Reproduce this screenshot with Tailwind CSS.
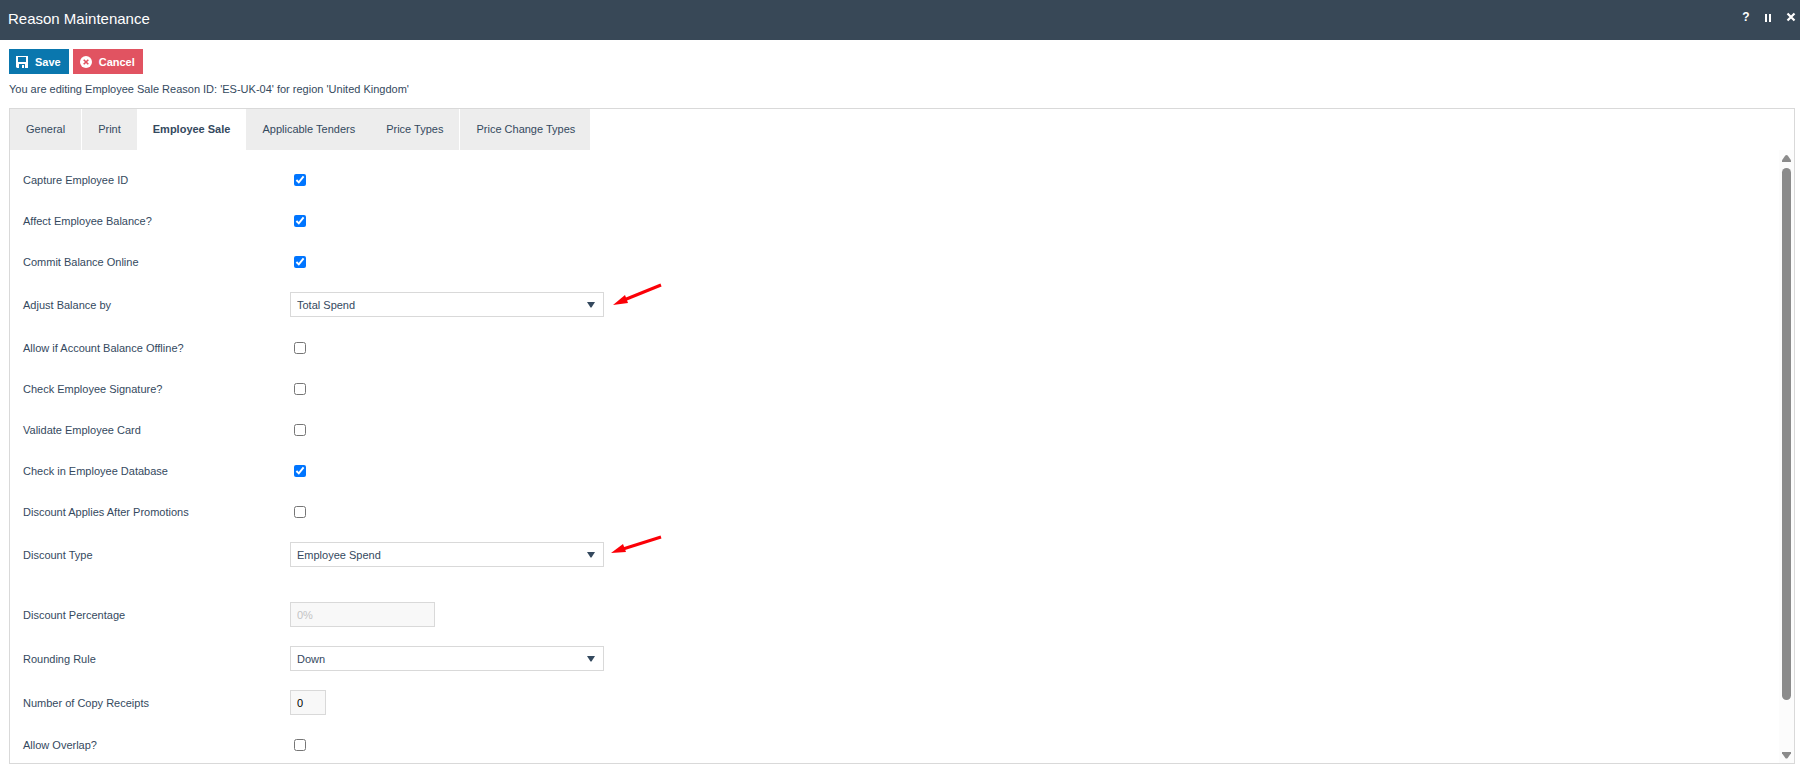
<!DOCTYPE html>
<html lang="en">
<head>
    <meta charset="UTF-8">
    <meta name="viewport" content="width=device-width, initial-scale=1.0">
    <title>Reason Maintenance</title>
    <script src="https://cdn.jsdelivr.net/npm/@tailwindcss/browser@4"></script>
    <style>
        body {
            font-family: 'Liberation Sans', Arial, sans-serif;
        }
    </style>
</head>
<body class="h-screen flex flex-col overflow-hidden bg-white text-[11px] leading-4 text-[#34495e]">
    <!-- Header -->
    <header class="h-10 shrink-0 flex items-center justify-between bg-[#384857] text-white pl-2 pr-[3px] pb-[2px]">
        <h1 class="text-[15px] leading-5">Reason Maintenance</h1>
        <div class="flex items-center gap-3 pb-1">
            <button type="button" aria-label="Help" class="w-[10px] h-4 font-bold text-[12px] leading-4 text-center">?</button>
            <button type="button" aria-label="Pause" class="w-[10px] h-4 flex items-center justify-center pt-[2px]">
                <svg class="w-[10px] h-[10px]" viewBox="0 0 10 10" fill="currentColor"><path d="M2 1h2v8H2zM6 1h2v8H6z" /></svg>
            </button>
            <button type="button" aria-label="Close" class="w-3 h-4 flex items-center justify-center">
                <svg class="w-[10px] h-[10px]" viewBox="0 0 10 10" fill="none" stroke="currentColor" stroke-width="2.2"><path d="M1.5 1.5l7 7M8.5 1.5l-7 7" /></svg>
            </button>
        </div>
    </header>

    <main class="flex-1 min-h-0 flex flex-col pt-[9px] pl-[9px] pr-[5px] pb-px">
        <!-- Toolbar -->
        <div class="flex gap-1">
            <button type="button" class="h-[25px] flex items-center gap-[7px] pl-[7px] pr-2 bg-[#0a77ae] text-white font-bold">
                <svg class="w-3 h-3" viewBox="0 0 12 12"><path fill="#fff" fill-rule="evenodd" d="M0 0h12v12H1L0 11zM2 1v5h8V1zM3 8v4h6V8z" /><path fill="#fff" d="M6 9h2v3H6z" /></svg>
                Save
            </button>
            <button type="button" class="h-[25px] flex items-center gap-[7px] pl-[7px] pr-2 bg-[#e15361] text-white font-bold">
                <svg class="w-3 h-3" viewBox="0 0 12 12"><circle cx="6" cy="6" r="6" fill="#fff" /><path d="M3.7 3.7l4.6 4.6M8.3 3.7L3.7 8.3" stroke="#e15361" stroke-width="1.6" /></svg>
                Cancel
            </button>
        </div>
        <p class="mt-[7px] mb-[11px]">You are editing Employee Sale Reason ID: 'ES-UK-04' for region 'United Kingdom'</p>

        <section class="flex-1 min-h-0 flex flex-col border border-[#d9d9d9]">
            <!-- Tabs -->
            <nav class="h-[41px] shrink-0 flex">
                <a href="#general" class="flex items-center px-4 pb-[2px] mr-px bg-[#ededed]">General</a>
                <a href="#print" class="flex items-center px-4 pb-[2px] bg-[#ededed]">Print</a>
                <a href="#employee-sale" class="flex items-center px-4 pb-[2px] font-bold">Employee Sale</a>
                <a href="#tenders" class="flex items-center px-4 pb-[2px] bg-[#ededed]">Applicable Tenders</a>
                <a href="#price-types" class="flex items-center pl-[15px] pr-4 pb-[2px] mr-px bg-[#ededed]">Price Types</a>
                <a href="#price-change" class="flex items-center pl-4 pr-[15px] pb-[2px] bg-[#ededed]">Price Change Types</a>
            </nav>

            <div class="flex-1 min-h-0 flex">
                <!-- Employee Sale settings -->
                <form class="flex-1 overflow-y-auto [scrollbar-width:none] pt-[9px] pl-[13px]">
                    <div class="h-[41px] flex items-center">
                        <label for="capture-id" class="w-[267px]">Capture Employee ID</label>
                        <input id="capture-id" type="checkbox" checked class="w-3 h-3 ml-1">
                    </div>
                    <div class="h-[41px] flex items-center">
                        <label for="affect-balance" class="w-[267px]">Affect Employee Balance?</label>
                        <input id="affect-balance" type="checkbox" checked class="w-3 h-3 ml-1">
                    </div>
                    <div class="h-[41px] flex items-center">
                        <label for="commit-balance" class="w-[267px]">Commit Balance Online</label>
                        <input id="commit-balance" type="checkbox" checked class="w-3 h-3 ml-1">
                    </div>
                    <div class="h-[45px] flex items-center">
                        <label for="adjust-by" class="w-[267px]">Adjust Balance by</label>
                        <div class="relative w-[314px]">
                            <select id="adjust-by" class="block w-full h-[25px] pl-[6px] appearance-none bg-white border border-[#d9d9d9]">
                                <option>Total Spend</option>
                            </select>
                            <svg class="absolute right-[9px] top-[10px] w-2 h-[6px] pointer-events-none" viewBox="0 0 8 6" fill="#34495e"><path d="M0 0h8L4.5 5.5h-1z" /></svg>
                        </div>
                        <svg class="w-[60px] h-[46px]" viewBox="0 0 60 46" fill="#fb0007"><path d="M57 3L20 18" stroke="#fb0007" stroke-width="3" stroke-linecap="butt" /><path d="M9 23l12-10 3 8z" /></svg>
                    </div>
                    <div class="h-[41px] flex items-center">
                        <label for="allow-offline" class="w-[267px]">Allow if Account Balance Offline?</label>
                        <input id="allow-offline" type="checkbox" class="w-3 h-3 ml-1">
                    </div>
                    <div class="h-[41px] flex items-center">
                        <label for="check-signature" class="w-[267px]">Check Employee Signature?</label>
                        <input id="check-signature" type="checkbox" class="w-3 h-3 ml-1">
                    </div>
                    <div class="h-[41px] flex items-center">
                        <label for="validate-card" class="w-[267px]">Validate Employee Card</label>
                        <input id="validate-card" type="checkbox" class="w-3 h-3 ml-1">
                    </div>
                    <div class="h-[41px] flex items-center">
                        <label for="check-database" class="w-[267px]">Check in Employee Database</label>
                        <input id="check-database" type="checkbox" checked class="w-3 h-3 ml-1">
                    </div>
                    <div class="h-[41px] flex items-center">
                        <label for="after-promotions" class="w-[267px]">Discount Applies After Promotions</label>
                        <input id="after-promotions" type="checkbox" class="w-3 h-3 ml-1">
                    </div>
                    <div class="h-[45px] flex items-center">
                        <label for="discount-type" class="w-[267px]">Discount Type</label>
                        <div class="relative w-[314px]">
                            <select id="discount-type" class="block w-full h-[25px] pl-[6px] appearance-none bg-white border border-[#d9d9d9]">
                                <option>Employee Spend</option>
                            </select>
                            <svg class="absolute right-[9px] top-[10px] w-2 h-[6px] pointer-events-none" viewBox="0 0 8 6" fill="#34495e"><path d="M0 0h8L4.5 5.5h-1z" /></svg>
                        </div>
                        <svg class="w-[60px] h-[46px]" viewBox="0 0 60 46" fill="#fb0007"><path d="M57 5L19 17" stroke="#fb0007" stroke-width="3" /><path d="M7 21l12-9 3 8z" /></svg>
                    </div>
                    <div class="h-[43px] mt-4 flex items-center">
                        <label for="discount-percentage" class="w-[267px]">Discount Percentage</label>
                        <input id="discount-percentage" type="text" value="0%" disabled class="w-[145px] h-[25px] pl-[6px] bg-[#f8f8f8] border border-[#d9d9d9] text-[#c4c4c4]">
                    </div>
                    <div class="h-[45px] flex items-center">
                        <label for="rounding-rule" class="w-[267px]">Rounding Rule</label>
                        <div class="relative w-[314px]">
                            <select id="rounding-rule" class="block w-full h-[25px] pl-[6px] appearance-none bg-white border border-[#d9d9d9]">
                                <option>Down</option>
                            </select>
                            <svg class="absolute right-[9px] top-[10px] w-2 h-[6px] pointer-events-none" viewBox="0 0 8 6" fill="#34495e"><path d="M0 0h8L4.5 5.5h-1z" /></svg>
                        </div>
                    </div>
                    <div class="h-[43px] flex items-center">
                        <label for="copy-receipts" class="w-[267px]">Number of Copy Receipts</label>
                        <input id="copy-receipts" type="text" value="0" class="w-9 h-[25px] pl-[6px] bg-[#f8f8f8] border border-[#d9d9d9] text-black">
                    </div>
                    <div class="h-[41px] flex items-center">
                        <label for="allow-overlap" class="w-[267px]">Allow Overlap?</label>
                        <input id="allow-overlap" type="checkbox" class="w-3 h-3 ml-1">
                    </div>
                </form>

                <!-- Scrollbar -->
                <div class="w-[15px] flex flex-col items-center gap-[6px] py-1 bg-[#fcfcfc]" aria-hidden="true">
                    <svg class="w-[9px] h-2 shrink-0" viewBox="0 0 9 8" fill="#8b8b8b"><path d="M3.3 1.6q1.2-1.2 2.4 0L9 6.2V8H0V6.2z" /></svg>
                    <div class="w-[9px] h-[88%] rounded-full bg-[#8b8b8b]"></div>
                    <svg class="w-[9px] h-2 shrink-0 mt-auto" viewBox="0 0 9 8" fill="#8b8b8b"><path d="M3.3 6.9q1.2 1.2 2.4 0L9 2.3V1H0v1.3z" /></svg>
                </div>
            </div>
        </section>
    </main>
</body>
</html>
